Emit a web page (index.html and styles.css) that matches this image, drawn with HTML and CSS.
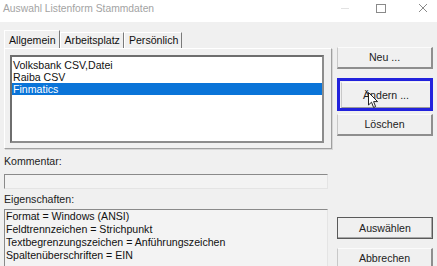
FILE: index.html
```html
<!DOCTYPE html>
<html lang="de">
<head>
  <meta charset="UTF-8" />
  <title>Auswahl Listenform Stammdaten</title>
  <link rel="stylesheet" href="styles.css">
</head>
<body>
  <div class="window">
    <div class="titlebar">
      <span class="title">Auswahl Listenform Stammdaten</span>
      <div class="controls">
        <span class="ctl min"></span>
        <span class="ctl max"></span>
        <svg class="ctl close" width="10" height="10" viewBox="0 0 10 10">
          <path d="M1 1 L9 9 M9 1 L1 9" stroke="#8a8a8a" stroke-width="1" fill="none"/>
        </svg>
      </div>
    </div>

    <div class="content">
      <div class="left">
        <div class="tabs">
          <div class="tab active">Allgemein</div>
          <div class="tab">Arbeitsplatz</div>
          <div class="tab">Persönlich</div>
        </div>
        <div class="tabpanel">
          <div class="listbox">
            <div class="row">Volksbank CSV,Datei</div>
            <div class="row">Raiba CSV</div>
            <div class="row selected">Finmatics</div>
          </div>
        </div>

        <div class="label first">Kommentar:</div>
        <div class="field comment"></div>

        <div class="label">Eigenschaften:</div>
        <div class="field props">
          <div class="line">Format = Windows (ANSI)</div>
          <div class="line">Feldtrennzeichen = Strichpunkt</div>
          <div class="line">Textbegrenzungszeichen = Anführungszeichen</div>
          <div class="line">Spaltenüberschriften = EIN</div>
        </div>
      </div>

      <div class="right">
        <div class="btn">Neu ...</div>
        <div class="focus">
          <div class="btn inner">Ändern ...</div>
        </div>
        <div class="btn">Löschen</div>

        <div class="btn default">Auswählen</div>
        <div class="btn last">Abbrechen</div>
      </div>
    </div>

    <!-- mouse pointer over the Ändern button -->
    <svg class="cursor" width="11" height="17" viewBox="0 0 11 17">
      <path d="M0.5 0.5 L0.5 13 L3.5 10.2 L5.6 15.5 L7.6 14.6 L5.6 9.6 L9.6 9.6 Z" fill="#fff" stroke="#222" stroke-width="1"/>
    </svg>
  </div>
</body>
</html>
```

FILE: styles.css
```css
* {
  margin: 0;
  padding: 0;
  box-sizing: border-box;
}

body {
  background: #f0f0f0;
  font-family: "Liberation Sans", Arial, sans-serif;
  font-size: 10.6px;
  color: #111;
  overflow: hidden;
}

.window {
  position: relative;
  width: 437px;
  height: 266px;
  background: #f0f0f0;
  overflow: hidden;
}

/* title bar */
.titlebar {
  height: 22px;
  background: #fff;
  display: flex;
  align-items: center;
  justify-content: space-between;
  padding: 0 0 6px 3px;
}

.title {
  font-size: 10.3px;
  color: #a3a3a3;
}

.controls {
  display: flex;
  align-items: center;
  height: 16px;
}

.ctl {
  display: block;
}

.min {
  width: 8px;
  height: 1px;
  background: #e2e2e2;
  margin-right: 27px;
}

.max {
  width: 10px;
  height: 9px;
  border: 1px solid #8a8a8a;
  margin-right: 32px;
}

.close {
  margin-right: 9px;
}

/* body of dialog */
.content {
  display: flex;
}

.left {
  width: 328px;
  margin-left: 4px;
}

.tabs {
  display: flex;
  margin-top: 8px;
  height: 18px;
  align-items: flex-end;
}

.tab {
  height: 16px;
  line-height: 15px;
  padding: 0 3px 0 4px;
  border-right: 1px solid #7a7a7a;
  border-top: 1px solid #fff;
  border-left: 1px solid #fff;
}

.tab.active {
  height: 18px;
  line-height: 18px;
  padding-left: 4px;
}

.tabpanel {
  border-top: 1px solid #fff;
  border-left: 1px solid #fff;
  border-right: 1px solid #a0a0a0;
  border-bottom: 1px solid #a0a0a0;
  box-shadow: 1px 1px 0 #d6d6d6;
  padding: 6px 7px 5px 5px;
}

.listbox {
  height: 88px;
  background: #fff;
  border: 2px solid #8c8c8c;
  border-top-color: #6e6e6e;
  border-left-color: #6e6e6e;
  padding-top: 2px;
}

.row {
  height: 12px;
  line-height: 12px;
  padding-left: 1px;
  white-space: nowrap;
}

.row.selected {
  background: #0a74d8;
  color: #fff;
}

.label {
  height: 13px;
  line-height: 13px;
  margin-top: 4px;
  color: #222;
}

.label.first {
  margin-top: 6px;
}

.field {
  width: 324px;
  border-top: 1px solid #8a8a8a;
  border-left: 1px solid #8a8a8a;
  border-right: 1px solid #e4e4e4;
  border-bottom: 1px solid #e4e4e4;
  background: #f3f3f3;
}

.comment {
  height: 15px;
  margin-top: 6px;
}

.props {
  margin-top: 3px;
  height: 70px;
  padding-left: 1px;
}

.line {
  height: 13px;
  line-height: 13px;
  white-space: nowrap;
}

/* buttons */
.right {
  display: flex;
  flex-direction: column;
  width: 96px;
  margin-left: 5px;
  padding-top: 25px;
}

.btn {
  height: 22px;
  line-height: 19px;
  text-align: center;
  color: #222;
  background: #f0f0f0;
  border-top: 1px solid #fbfbfb;
  border-left: 1px solid #c8c8c8;
  border-right: 2px solid #8e8e8e;
  border-bottom: 2px solid #8e8e8e;
  margin-bottom: 3px;
}

.focus {
  height: 33px;
  margin-top: 6px;
  margin-bottom: 3px;
  border: 3px solid #2222dc;
  padding: 1px 0 0 1px;
}

.btn.inner {
  height: 26px;
  line-height: 24px;
  border-right: none;
  border-bottom: 1px solid #9a9a9a;
  margin: 0;
}

.btn.default {
  margin-top: 78px;
  border: 1px solid #5a5a5a;
  box-shadow: inset -1px -1px 0 #a8a8a8;
  line-height: 20px;
  margin-bottom: 9px;
}

.btn.last {
  height: 24px;
}

.cursor {
  position: absolute;
  left: 368px;
  top: 92px;
}
```
